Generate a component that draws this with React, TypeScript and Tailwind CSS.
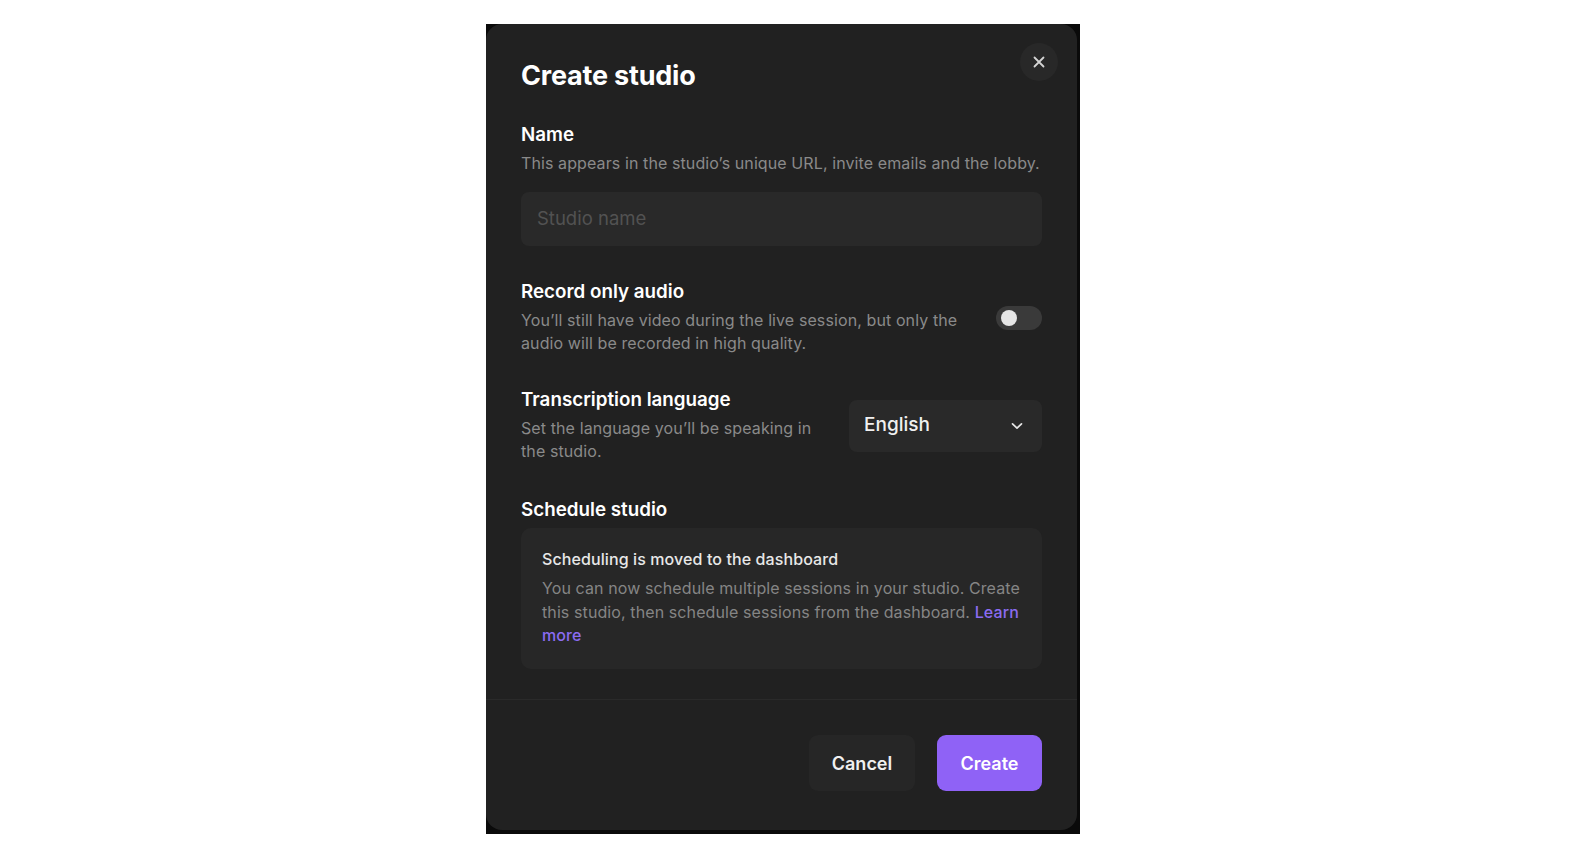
import React from "react";

export default function App() {
  return (
    <div className="w-[1574px] h-[860px] bg-white relative" style={{ fontFamily: "Inter, 'Noto Sans', sans-serif" }}>
      <div className="absolute left-[486px] top-[24px] w-[594px] h-[810px] bg-[#0a0a0a]">
        <div className="w-[591px] h-[806px] bg-[#212121] rounded-[16px] flex flex-col relative">
          <button className="absolute right-[19px] top-[19px] w-[38px] h-[38px] rounded-full bg-[#282828] flex items-center justify-center">
            <svg width="12" height="12" viewBox="0 0 12 12" fill="none" stroke="#d4d4d4" strokeWidth="1.8" strokeLinecap="round">
              <path d="M1.5 1.5 L10.5 10.5 M10.5 1.5 L1.5 10.5" />
            </svg>
          </button>
          <div className="px-[35px] pt-[35px] flex-1 flex flex-col">
            <h1 className="text-[27px] leading-[33px] font-bold text-white tracking-[-0.2px]">Create studio</h1>

            <div className="mt-[31px] text-[18.8px] leading-[24px] font-semibold text-white">Name</div>
            <div className="mt-[5px] text-[16px] leading-[23px] text-[#8a8a8a] tracking-[0.1px]">
              This appears in the studio’s unique URL, invite emails and the lobby.
            </div>
            <div className="mt-[17px] h-[54px] w-full rounded-[8px] bg-[#292929] flex items-center px-[16px]">
              <span className="text-[18.5px] text-[#525252]">Studio name</span>
            </div>

            <div className="mt-[34px] flex items-start justify-between">
              <div className="w-[460px]">
                <div className="text-[18.8px] leading-[24px] font-semibold text-white">Record only audio</div>
                <div className="mt-[5px] text-[16px] leading-[23px] text-[#8a8a8a] tracking-[0.1px]">
                  You’ll still have video during the live session, but only the audio will be recorded in high quality.
                </div>
              </div>
              <div className="mt-[26px] w-[46px] h-[24px] rounded-full bg-[#3a3a3a] flex items-center px-[5px]">
                <div className="w-[16px] h-[16px] rounded-full bg-[#e6e6e6]" />
              </div>
            </div>

            <div className="mt-[33px] flex items-center justify-between">
              <div className="w-[310px]">
                <div className="text-[18.8px] leading-[24px] font-semibold text-white">Transcription language</div>
                <div className="mt-[5px] text-[16px] leading-[23px] text-[#8a8a8a] tracking-[0.1px]">
                  Set the language you’ll be speaking in the studio.
                </div>
              </div>
              <div className="w-[193px] h-[52px] rounded-[8px] bg-[#292929] flex items-center justify-between pl-[15px] pr-[19px]">
                <span className="text-[19px] font-medium text-[#f0f0f0]">English</span>
                <svg width="12" height="8" viewBox="0 0 12 8" fill="none" stroke="#e5e5e5" strokeWidth="1.7" strokeLinecap="round" strokeLinejoin="round">
                  <path d="M1.5 1.8 L6 6.2 L10.5 1.8" />
                </svg>
              </div>
            </div>

            <div className="mt-[35px] text-[18.8px] leading-[24px] font-semibold text-white">Schedule studio</div>
            <div className="mt-[6px] rounded-[10px] bg-[#272727] px-[21px] pt-[20px] pb-[21px]">
              <div className="text-[16px] leading-[22px] font-medium text-[#e8e8e8] tracking-[0.1px]">Scheduling is moved to the dashboard</div>
              <div className="mt-[7px] text-[16px] leading-[23.5px] text-[#858585] tracking-[0.1px]">
                You can now schedule multiple sessions in your studio. Create this studio, then schedule sessions from the dashboard.{" "}
                <span className="text-[#8b6cf2] font-medium">Learn more</span>
              </div>
            </div>
          </div>

          <div className="h-[1px] bg-[#2a2a2a]" />
          <div className="h-[130px] flex items-start justify-end gap-[22px] px-[35px] pt-[35px]">
            <button className="w-[106px] h-[56px] rounded-[9px] bg-[#262626] text-[18px] font-semibold text-[#f0f0f0]">Cancel</button>
            <button className="w-[105px] h-[56px] rounded-[9px] bg-[#8f62f6] text-[18px] font-semibold text-white">Create</button>
          </div>
        </div>
      </div>
    </div>
  );
}
